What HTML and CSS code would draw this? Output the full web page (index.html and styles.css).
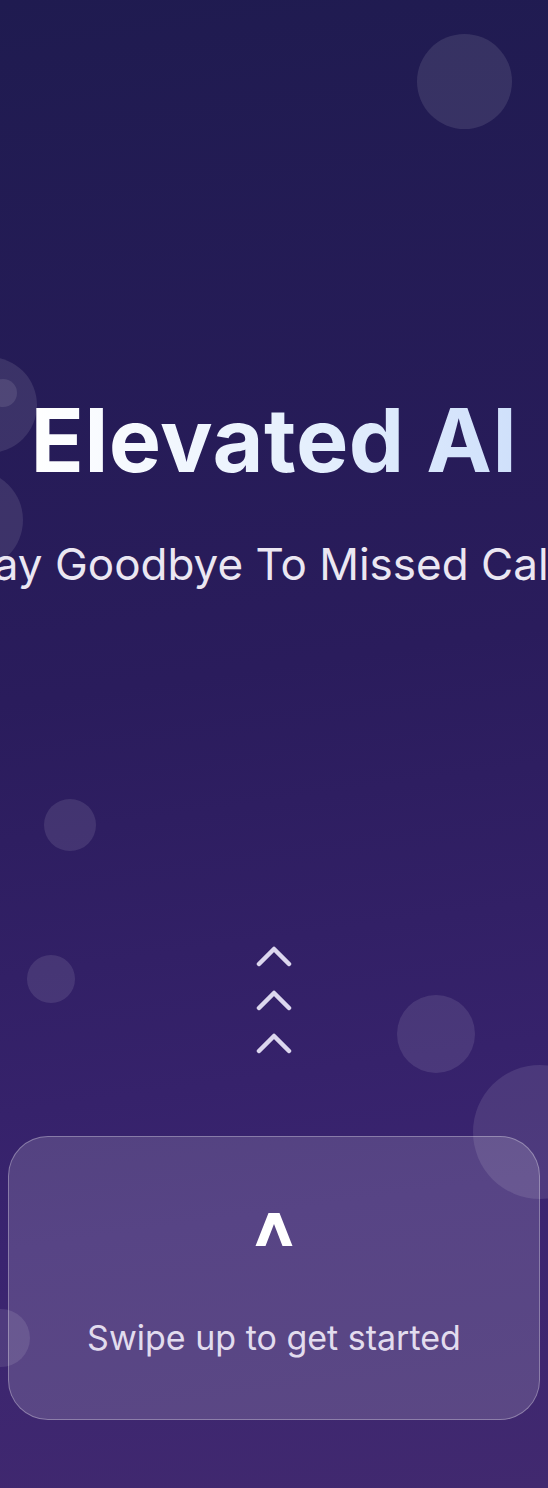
FILE: index.html
```html
<!DOCTYPE html>
<html>
<head>
<meta charset="utf-8">
<link rel="stylesheet" href="styles.css">
</head>
<body>
<div class="screen">
  <div class="bubbles">
    <span class="bubble b1"></span>
    <span class="bubble b2"></span>
    <span class="bubble b2s"></span>
    <span class="bubble b3"></span>
    <span class="bubble b4"></span>
    <span class="bubble b5"></span>
    <span class="bubble b6"></span>
    <span class="bubble b7"></span>
    <span class="bubble b8"></span>
  </div>
  <div class="hero">
    <h1 class="title">Elevated AI</h1>
    <p class="subtitle">Say Goodbye To Missed Calls</p>
  </div>
  <div class="chevrons">
    <svg class="chev" viewBox="0 0 36 22"><path d="M3 19 L18 4 L33 19"/></svg>
    <svg class="chev" viewBox="0 0 36 22"><path d="M3 19 L18 4 L33 19"/></svg>
    <svg class="chev" viewBox="0 0 36 22"><path d="M3 19 L18 4 L33 19"/></svg>
  </div>
  <div class="card">
    <svg class="caret" viewBox="0 0 37 33"><polygon points="13,0 24,0 37,33 27,33 18.5,11 10,33 0,33"/></svg>
    <p class="swipe">Swipe up to get started</p>
  </div>
</div>
</body>
</html>
```
FILE: styles.css
```css
html, body {
  margin: 0;
  padding: 0;
}
body {
  width: 548px;
  height: 1488px;
  overflow: hidden;
  font-family: Inter, "Noto Sans", sans-serif;
}
.screen {
  position: relative;
  width: 548px;
  height: 1488px;
  overflow: hidden;
  background: linear-gradient(172deg, #1f1b50 0%, #2a1c5c 45%, #3a2470 80%, #41296f 100%);
  display: flex;
  flex-direction: column;
  align-items: center;
}
.bubbles {
  position: absolute;
  inset: 0;
  pointer-events: none;
}
.bubble {
  position: absolute;
  border-radius: 50%;
  background: rgba(255, 255, 255, 0.1);
}
.b1 { left: 417px; top: 34px; width: 95px; height: 95px; }
.b2 { left: -59px; top: 357px; width: 96px; height: 96px; }
.b2s { left: -11px; top: 379px; width: 28px; height: 28px; }
.b3 { left: -77px; top: 470px; width: 100px; height: 100px; }
.b4 { left: 44px; top: 799px; width: 52px; height: 52px; }
.b5 { left: 27px; top: 955px; width: 48px; height: 48px; }
.b6 { left: 397px; top: 995px; width: 78px; height: 78px; }
.b7 { left: 473px; top: 1065px; width: 134px; height: 134px; }
.b8 { left: -28px; top: 1309px; width: 58px; height: 58px; }
.hero {
  position: relative;
  margin-top: 385px;
  width: 548px;
  display: flex;
  flex-direction: column;
  align-items: center;
}
.title {
  margin: 0;
  font-size: 88px;
  line-height: 110px;
  font-weight: 700;
  letter-spacing: 0.5px;
  background: linear-gradient(90deg, #ffffff 0%, #e6f0fd 55%, #cfe0fb 100%);
  -webkit-background-clip: text;
  background-clip: text;
  color: transparent;
}
.subtitle {
  margin: 41px 0 0;
  white-space: nowrap;
  font-size: 44px;
  line-height: 56px;
  font-weight: 400;
  color: #ebe7f2;
}
.chevrons {
  position: relative;
  margin-top: 353px;
  display: flex;
  flex-direction: column;
  align-items: center;
  gap: 21.5px;
}
.chev {
  width: 36px;
  height: 22px;
  display: block;
}
.chev path {
  fill: none;
  stroke: #dcd7ee;
  stroke-width: 4.5;
  stroke-linecap: round;
  stroke-linejoin: round;
}
.card {
  position: relative;
  margin-top: 82px;
  box-sizing: border-box;
  width: 532px;
  height: 284px;
  border-radius: 40px;
  border: 1.5px solid rgba(255, 255, 255, 0.3);
  background: rgba(255, 255, 255, 0.15);
  display: flex;
  flex-direction: column;
  align-items: center;
}
.caret {
  margin-top: 76px;
  width: 38px;
  height: 33px;
  display: block;
}
.caret polygon {
  fill: #ffffff;
}
.swipe {
  margin: 72px 0 0;
  font-size: 34px;
  line-height: 40px;
  color: #e2dcee;
}
```
